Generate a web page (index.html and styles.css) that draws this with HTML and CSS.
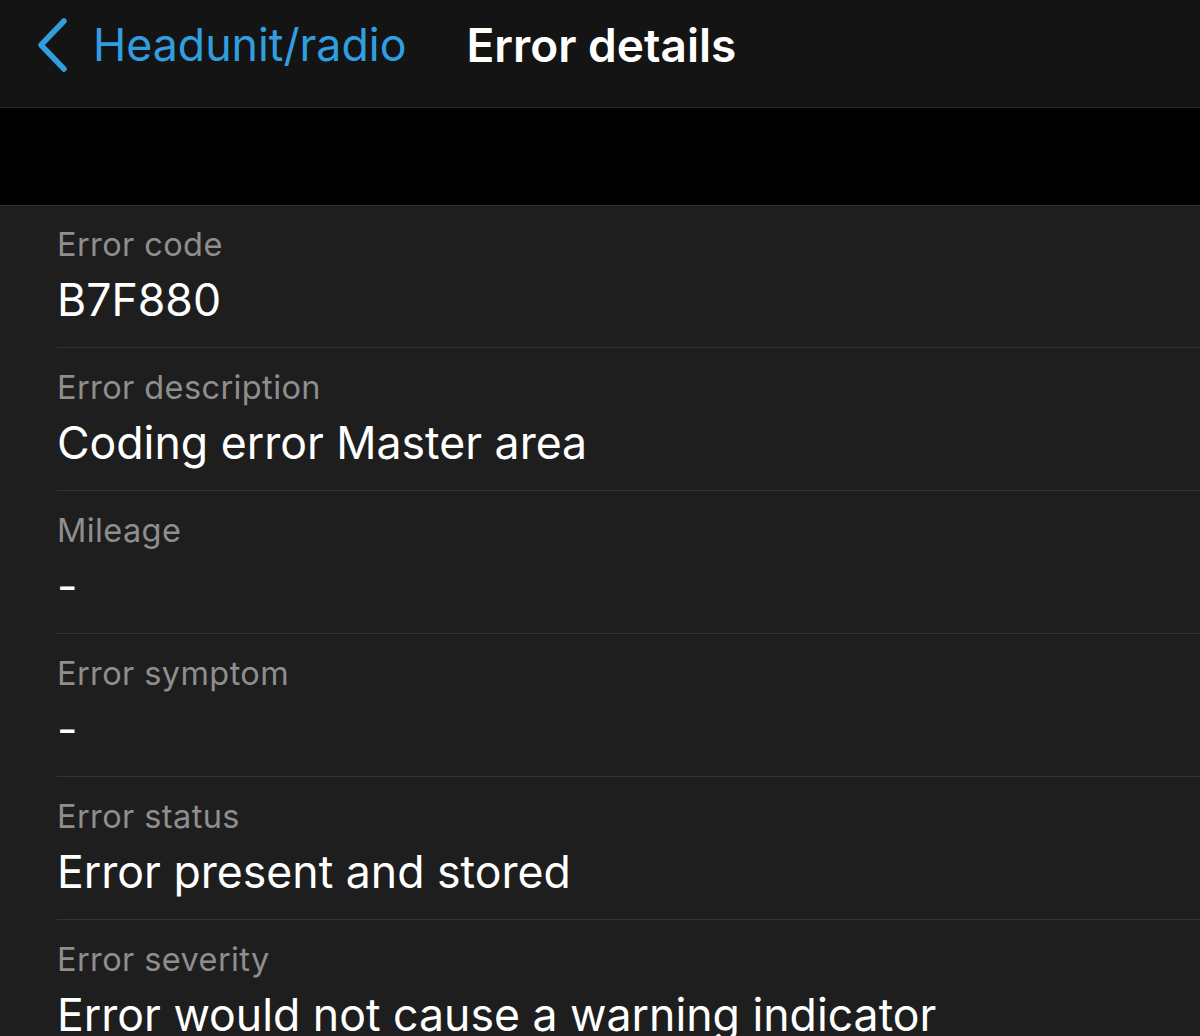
FILE: index.html
```html
<!DOCTYPE html>
<html lang="en">
<head>
  <meta charset="UTF-8">
  <meta name="viewport" content="width=device-width, initial-scale=1.0">
  <title>Error details</title>
  <link rel="stylesheet" href="styles.css">
</head>
<body>

<header class="nav-bar">
  <a class="back-link" href="#">
    <svg class="back-chevron" width="34" height="56" viewBox="0 0 34 56">
      <path d="M29 4 L6 28 L29 52" fill="none" stroke="currentColor" stroke-width="5.5" stroke-linecap="round" stroke-linejoin="round"/>
    </svg>
    <span>Headunit/radio</span>
  </a>
  <h1 class="nav-title">Error details</h1>
</header>

<div class="banner"></div>

<ul class="detail-list">
  <li class="detail-row">
    <span class="detail-label">Error code</span>
    <span class="detail-value">B7F880</span>
  </li>
  <li class="detail-row">
    <span class="detail-label">Error description</span>
    <span class="detail-value">Coding error Master area</span>
  </li>
  <li class="detail-row">
    <span class="detail-label">Mileage</span>
    <span class="detail-value">-</span>
  </li>
  <li class="detail-row">
    <span class="detail-label">Error symptom</span>
    <span class="detail-value">-</span>
  </li>
  <li class="detail-row">
    <span class="detail-label">Error status</span>
    <span class="detail-value">Error present and stored</span>
  </li>
  <li class="detail-row">
    <span class="detail-label">Error severity</span>
    <span class="detail-value">Error would not cause a warning indicator</span>
  </li>
</ul>

</body>
</html>
```

FILE: styles.css
```css
body {
  margin: 0;
  background: #1e1e1e;
  font-family: Inter, "Noto Sans", sans-serif;
  color: #fff;
  overflow: hidden;
}

.nav-bar {
  display: flex;
  align-items: center;
  gap: 60px;
  height: 108px;
  padding: 0 0 17px 35px;
  background: #141414;
  border-bottom: 1px solid #262626;
  box-sizing: border-box;
}
.back-link {
  display: flex;
  align-items: center;
  gap: 24px;
  color: #2f9fe0;
  text-decoration: none;
  font-size: 44.7px;
}
.back-chevron { display: block; }
.nav-title {
  margin: 0;
  font-size: 46px;
  font-weight: 600;
}

.banner {
  height: 97px;
  background: #000;
  border-bottom: 1px solid #2c2c2c;
}

.detail-list {
  list-style: none;
  margin: 0;
  padding: 0 0 0 57px;
}
.detail-row {
  display: flex;
  flex-direction: column;
  justify-content: flex-end;
  height: 143px;
  padding-bottom: 18px;
  border-bottom: 1px solid #333;
  box-sizing: border-box;
}
.detail-row:first-child { height: 142px; }
.detail-label {
  font-size: 32.5px;
  letter-spacing: 0.4px;
  color: #8e8e8e;
  line-height: 40px;
}
.detail-value {
  margin-top: 6px;
  font-size: 44.6px;
  line-height: 58px;
  white-space: nowrap;
}
```
